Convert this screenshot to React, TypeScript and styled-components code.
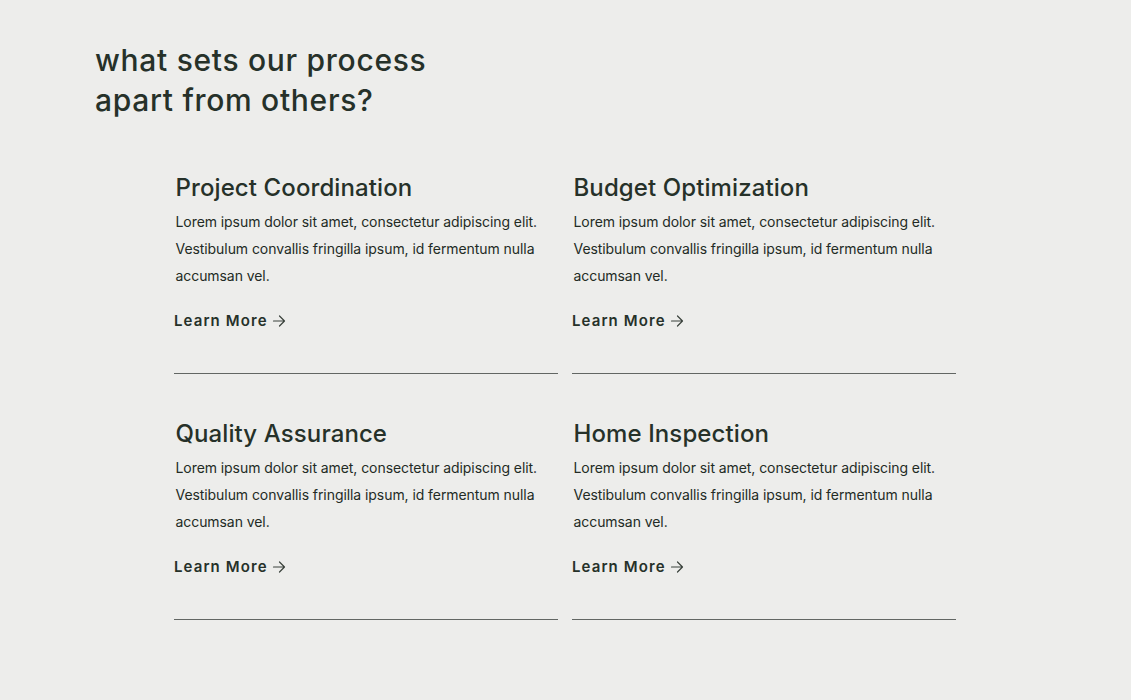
import styled, { createGlobalStyle } from "styled-components";
import React from "react";

const Global = createGlobalStyle`
  html, body {
    margin: 0;
    padding: 0;
    background: #ededeb;
  }
  body {
    font-family: Inter, "Liberation Sans", sans-serif;
    color: #263129;
  }
`;

const Page = styled.section`
  min-height: 700px;
  box-sizing: border-box;
  padding: 40px 0 0 95px;
  background: #ededeb;
`;

const Heading = styled.h2`
  margin: 0;
  font-size: 30px;
  font-weight: 500;
  line-height: 40px;
  letter-spacing: 0.7px;
  color: #263129;
`;

const Grid = styled.div`
  display: grid;
  grid-template-columns: 384px 384px;
  column-gap: 14px;
  row-gap: 44px;
  margin: 52px 0 0 79px;
`;

const Card = styled.div`
  display: flex;
  flex-direction: column;
  border-bottom: 1px solid #626663;
  padding-bottom: 43px;
`;

const Title = styled.h3`
  margin: 0 0 0 1.5px;
  font-size: 24px;
  font-weight: 500;
  line-height: 32px;
  letter-spacing: 0.1px;
  color: #263129;
`;

const Body = styled.p`
  margin: 4px 0 0 1.5px;
  font-size: 14px;
  line-height: 27px;
  letter-spacing: -0.07px;
  color: #232b25;
  max-width: 375px;
`;

const More = styled.a`
  display: flex;
  align-items: center;
  gap: 4px;
  margin-top: 22px;
  font-size: 15px;
  font-weight: 600;
  letter-spacing: 1.1px;
  color: #263129;
  text-decoration: none;
`;

const Arrow = () => (
  <svg width="14" height="14" viewBox="0 0 14 14" fill="none" stroke="#3a423c" strokeWidth="1.2" strokeLinecap="round" strokeLinejoin="round">
    <path d="M1.5 7h11M7.5 2l5 5-5 5" />
  </svg>
);

const items = [
  "Project Coordination",
  "Budget Optimization",
  "Quality Assurance",
  "Home Inspection",
];

const App = () => {
  return (
    <Page>
      <Global />
      <Heading>
        what sets our process
        <br />
        apart from others?
      </Heading>
      <Grid>
        {items.map((t) => (
          <Card key={t}>
            <Title>{t}</Title>
            <Body>
              Lorem ipsum dolor sit amet, consectetur adipiscing elit. Vestibulum convallis fringilla ipsum, id fermentum nulla accumsan vel.
            </Body>
            <More href="#">
              Learn More <Arrow />
            </More>
          </Card>
        ))}
      </Grid>
    </Page>
  );
};

export default App;
